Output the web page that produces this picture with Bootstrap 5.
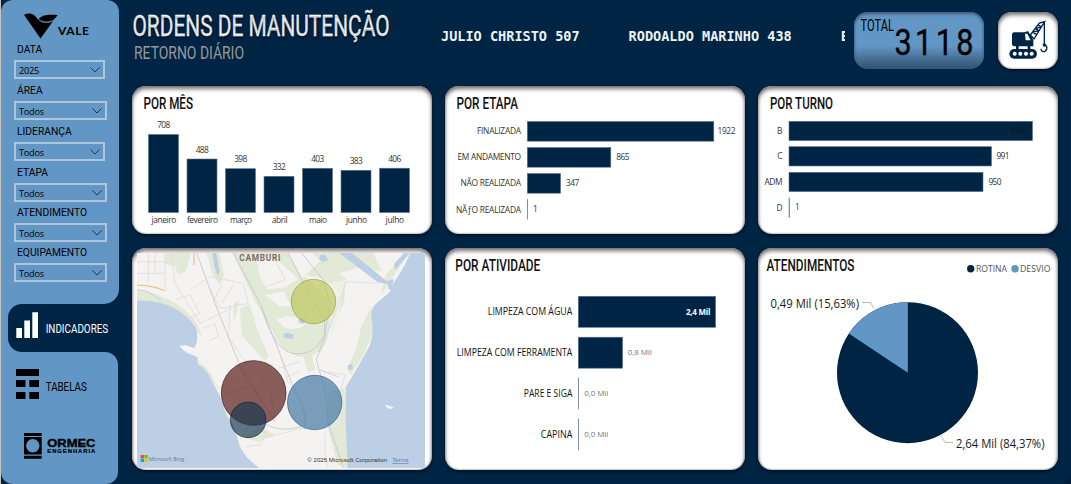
<!DOCTYPE html>
<html lang="pt-BR">
<head>
<meta charset="utf-8">
<meta name="viewport" content="width=device-width, initial-scale=1">
<title>Ordens de Manutenção</title>
<link href="https://cdn.jsdelivr.net/npm/bootstrap@5.3.0/dist/css/bootstrap.min.css" rel="stylesheet">
<style>
:root{--navy:#002443;--sky:#6296c4}
body{background:#001c36;font-family:"Open Sans","Noto Sans",sans-serif;color:#000;overflow:hidden}
svg{display:block}
.page{width:1071px;height:484px;background:var(--navy);border-left:1px solid #c9c4c0;border-radius:0 0 12px 0}
.side{width:118px;flex:none}
.side-top{height:304px;background:var(--sky);border-radius:12px 12px 15px 0;padding:12px 0 0 13px}
.side-mid{height:48px;background:var(--sky)}
.side-mid a{height:48px;margin-left:7px;background:var(--navy);border-radius:14px 0 0 14px}
.side-bottom{height:132px;background:var(--sky);border-radius:0 13px 12px 12px;width:117px}
.side-joint{background:var(--navy)}
.filt{font-family:Roboto,sans-serif;font-size:10.3px;line-height:21px;padding-left:3px;height:21px}
.filt.low{height:20px;line-height:20px}
.pick{height:19px;width:93px;border:2px solid #afc6da;margin-bottom:1px;padding:1px 3px 0 3px;font-size:9.2px;letter-spacing:-.25px;line-height:15px}
.pick.narrow{width:91px}
.r{font-family:Roboto,sans-serif}
.ticker{font:bold 13.55px "DejaVu Sans Mono",monospace;color:#eef2f5;white-space:pre;width:404px;overflow:hidden;line-height:20px;height:20px;margin-top:26px}
.total{width:130px;height:57px;border-radius:14px;background:linear-gradient(#6296c4 60%,#31506e 100%);box-shadow:inset 0 2px 3px #42607d,inset 0 0 3px #42607d}
.tile{background:#fff;border:0;border-radius:14px;box-shadow:inset 0 3px 4px #77706f,inset 0 0 2px #556,0 2px 3px #00142b;overflow:hidden}
.row-a{height:148px}.row-b{height:222px}
.board{gap:13px}
.tile{width:300px;flex:none}
.tile.machine{width:60px;height:57px}
.t{font-family:Roboto,sans-serif;font-size:16.5px;font-weight:500;fill:#111}
.bars rect{fill:var(--navy);stroke:#5c7690;stroke-width:.6}
.lab{font-size:8.4px;fill:#333}
.cat{font-size:10px;fill:#111}
.val{font-size:8px;fill:#777}
.e{text-anchor:end}.m{text-anchor:middle}
</style>
</head>
<body>
<div class="page d-flex">
  <aside class="side d-flex flex-column">
    <div class="side-joint"><div class="side-top">
      <svg width="80" height="27" viewBox="14 12 80 27">
        <path d="M24 14.8C29 12.4 34 13.5 37 18.3L42 22.3C46 23.8 50 23 53.5 20.5L40.5 38.5Z"/>
        <path d="M38.5 19.2C43 13.8 50 14.7 57.5 15C54.5 20 49.5 24 43 21.8Z"/>
        <path d="M37.500 18.500Q42 23.800 53 21" fill="none" stroke="#6296c4" stroke-width=".8"/>
        <text x="58" y="34.8" font-family="Lato" font-weight="700" font-size="12" textLength="31">VALE</text>
      </svg>
      <div class="filt">DATA</div>
      <div class="pick narrow d-flex justify-content-between"><span>2025</span><svg width="10" height="14"><path d="M.5 4.5l4.5 4.5 4.5-4.5" fill="none" stroke="#24384c"/></svg></div>
      <div class="filt">ÁREA</div>
      <div class="pick d-flex justify-content-between"><span>Todos</span><svg width="10" height="14"><path d="M.5 4.5l4.5 4.5 4.5-4.5" fill="none" stroke="#24384c"/></svg></div>
      <div class="filt">LIDERANÇA</div>
      <div class="pick narrow d-flex justify-content-between"><span>Todos</span><svg width="10" height="14"><path d="M.5 4.5l4.5 4.5 4.5-4.5" fill="none" stroke="#24384c"/></svg></div>
      <div class="filt">ETAPA</div>
      <div class="pick d-flex justify-content-between"><span>Todos</span><svg width="10" height="14"><path d="M.5 4.5l4.5 4.5 4.5-4.5" fill="none" stroke="#24384c"/></svg></div>
      <div class="filt low">ATENDIMENTO</div>
      <div class="pick d-flex justify-content-between"><span>Todos</span><svg width="10" height="14"><path d="M.5 4.5l4.5 4.5 4.5-4.5" fill="none" stroke="#24384c"/></svg></div>
      <div class="filt low">EQUIPAMENTO</div>
      <div class="pick d-flex justify-content-between"><span>Todos</span><svg width="10" height="14"><path d="M.5 4.5l4.5 4.5 4.5-4.5" fill="none" stroke="#24384c"/></svg></div>
    </div></div>
    <div class="side-mid"><a class="d-block" href="#"><svg width="110" height="48" viewBox="8 304 110 48" fill="#fff">
      <path d="M16.3 328h5.7v10h-5.7zM24.3 320.5h5.7V338h-5.7zM32.3 312.3h5.7V338h-5.7z"/>
      <text class="r" x="45.7" y="333" font-size="13.3" textLength="62.5" lengthAdjust="spacingAndGlyphs">INDICADORES</text></svg></a></div>
    <div class="side-joint"><div class="side-bottom"><svg width="117" height="132" viewBox="1 352 117 132">
      <path d="M16 369h23v7H16zM16 380h9.5v7H16zM29.3 380H39v7h-9.7zM16 392h9.5v7H16zM29.3 392H39v7h-9.7z"/>
      <text class="r" x="45.7" y="391" font-size="13.3" textLength="41" lengthAdjust="spacingAndGlyphs">TABELAS</text>
      <path d="M24 433h17.7v3H24zM24 437h17.7v17.5H24zM24 455.7h17.7v3H24z"/><circle cx="32.8" cy="445.8" r="6.7" fill="#6296c4"/>
      <g font-family="Liberation Sans" font-weight="700" stroke="#000" stroke-width=".4"><text x="47.3" y="447.3" font-size="11.6" textLength="48" lengthAdjust="spacingAndGlyphs">ORMEC</text>
      <text x="47.3" y="453.3" font-size="5.8" stroke-width=".2" textLength="48">ENGENHARIA</text></g>
    </svg></div></div>
  </aside>
  <main class="flex-grow-1" style="padding-left:13px">
    <header class="d-flex" style="height:86px">
      <svg width="309" height="80" viewBox="132 0 309 80">
        <text class="r" x="132.5" y="36.3" font-size="30" fill="#fff" stroke="#fff" stroke-width=".3" textLength="257" lengthAdjust="spacingAndGlyphs" style="text-shadow:0 2px 2px #001225">ORDENS DE MANUTENÇÃO</text>
        <text class="r" x="134" y="59.3" font-size="19" fill="#999" textLength="110" lengthAdjust="spacingAndGlyphs">RETORNO DIÁRIO</text>
      </svg>
      <div class="ticker">JULIO CHRISTO 507      RODOALDO MARINHO 438      E</div>
      <div class="total" style="margin:12px 14px 0 9px"><svg width="130" height="57" viewBox="854 12 130 57">
        <text class="r" x="860.5" y="31.3" font-size="16.5" textLength="33.5" lengthAdjust="spacingAndGlyphs">TOTAL</text>
        <text class="r" transform="translate(894.500 55) scale(.84 1)" font-size="36.5" stroke="#000" stroke-width=".4" textLength="94">3118</text></svg></div>
      <div class="tile machine" style="margin-top:12px"><svg width="60" height="57" viewBox="654 36 180 171">
        <g fill="#002443"><path d="M703 97h33l12 20v22h-45q-7 0-7-7v-27q0-8 7-8z"/><rect x="688" y="147" width="83" height="29" rx="14.500"/><path d="M708 138h8v10h-8zM743 138h8v10h-8zM734 97l10-4 16 27v19h-18z"/></g>
        <path d="M735 101h7l10 20h-15z" fill="#fff"/>
        <g fill="#fff"><circle cx="704" cy="161" r="6"/><circle cx="721" cy="161" r="6"/><circle cx="738" cy="161" r="6"/><circle cx="755" cy="161" r="6"/></g>
        <path d="M751 105L778 69L794 65L762 117ZM758 97l12 6M758 97l19-6M766 86l10 6M766 86l20-6M775 74l10 8M793 65V134M793 134q9 3 7 13q-3 9-11 8q-6-2-6-9" fill="none" stroke="#002443" stroke-width="4"/><circle cx="793" cy="135" r="5" fill="#002443"/></svg></div>
    </header>
    <div class="board row-a d-flex">
      <section class="tile"><svg width="300" height="148" viewBox="132 86 300 148">
        <text class="t" x="143.500" y="108.500" textLength="49.500" lengthAdjust="spacingAndGlyphs">POR MÊS</text>
        <g class="bars"><rect x="148.500" y="134.500" width="30" height="78"/><rect x="187" y="159" width="30" height="53.500"/><rect x="225.500" y="168.700" width="30" height="43.800"/><rect x="264" y="176.300" width="30" height="36.200"/><rect x="302.500" y="168.300" width="30" height="44.200"/><rect x="341" y="170.300" width="30" height="42.200"/><rect x="379.500" y="168.200" width="30" height="44.300"/></g>
        <g class="lab m"><text x="163.700" y="128.200" textLength="13">708</text><text x="202.200" y="153" textLength="13">488</text><text x="240.700" y="162.300" textLength="13">398</text><text x="279.200" y="170" textLength="13">332</text><text x="317.700" y="162.300" textLength="13">403</text><text x="356.200" y="164.300" textLength="13">383</text><text x="394.700" y="162.300" textLength="13">406</text>
        <text x="163.900" y="223" textLength="25">janeiro</text><text x="202.500" y="223" textLength="31">fevereiro</text><text x="241" y="223" textLength="22">março</text><text x="279.700" y="223" textLength="16">abril</text><text x="318" y="223" textLength="18">maio</text><text x="356.500" y="223" textLength="21">junho</text><text x="394.800" y="223" textLength="18.500">julho</text></g>
      </svg></section>
      <section class="tile"><svg width="300" height="148" viewBox="445 86 300 148">
        <text class="t" x="456.500" y="108.500" textLength="61.500" lengthAdjust="spacingAndGlyphs">POR ETAPA</text>
        <g class="bars"><rect x="527.300" y="121.500" width="186.500" height="19.700"/><rect x="527.300" y="147.500" width="83.500" height="19.700"/><rect x="527.300" y="173.500" width="33.300" height="19.700"/><rect x="527.300" y="199.500" width=".3" height="19.700"/></g>
        <g class="lab e"><text x="521" y="134.200" textLength="44">FINALIZADA</text><text x="521" y="160.200" textLength="63.500">EM ANDAMENTO</text><text x="521" y="186.300" textLength="60.500">NÃO REALIZADA</text><text x="521" y="213" textLength="65">NÃƒO REALIZADA</text></g>
        <g class="lab"><text x="717.500" y="134.200" textLength="18">1922</text><text x="616.300" y="160.200" textLength="13.300">865</text><text x="566" y="186.200" textLength="13.300">347</text><text x="533" y="212.200">1</text></g>
      </svg></section>
      <section class="tile"><svg width="300" height="148" viewBox="758 86 300 148">
        <text class="t" x="770" y="108.500" textLength="63" lengthAdjust="spacingAndGlyphs">POR TURNO</text>
        <g class="bars"><rect x="789" y="121.300" width="243.500" height="19.300"/><rect x="789" y="146.700" width="202.500" height="19.300"/><rect x="789" y="172.300" width="194" height="19.300"/><rect x="789" y="198" width=".3" height="19.300"/></g>
        <g class="lab e"><text x="782.500" y="134">B</text><text x="782.500" y="159.300">C</text><text x="782.500" y="185.200" textLength="18">ADM</text><text x="782.500" y="211">D</text></g>
        <g class="lab"><text x="1010" y="134" textLength="17.500" style="fill:#0c1218">1192</text><text x="996.500" y="159.300" textLength="13">991</text><text x="988.500" y="185.300" textLength="13">950</text><text x="795" y="210.300">1</text></g>
      </svg></section>
    </div>
    <div class="board row-b d-flex" style="margin-top:14px">
      <section class="tile"><svg width="300" height="222" viewBox="132 248 300 222">
        <svg x="137" y="253" width="288" height="215" viewBox="36 39 864 645">
          <rect x="36" y="39" width="864" height="645" fill="#f5f3f2"/>
          <g fill="#e2e9d7">
            <path d="M36 150Q110 160 160 195Q220 235 230 290Q210 270 180 225Q120 190 36 182ZM118 39h80l-15 55-25 10-8-25-32-6zM245 39h38l14 65-12 30-22-28z"/>
            <path d="M322 39h168l42 75 60-58 70 60-5 75-45 75q-5 80-75 85-52-2-80-52L390 184Z"/>
            <path d="M560 39l75 62 75-20 60 15-25-57ZM535 350l25-10 10 50-22 5zM345 205l30-12 20 70 36 85-12 15-70-78zM325 190l20-8-18 62zM738 200l5 80-25 60-40 63-12-15 28-65 14-60zM215 355l45 50 30 90 35 60-20-20-65-135zM610 455l52-12 6 241-30-10-32-120zM350 590l60-30 40 25-50 20zM850 39l-25 40-60 90 20-70z"/>
            <path d="M600 130l60-10-25 130-15 40z" fill="#edf0e5"/>
          </g>
          <g fill="#f5f3f2"><path d="M395 55l45-10 50 45 30 28-45 25-50 5-20-40zM420 165l55-10 25 45-38-2zM455 240q45-28 85 13q-20 22-60 10zM535 105l50 8 60 50-40 10z"/></g>
          <g fill="#bccfe4"><path d="M36 182Q95 178 145 203Q190 226 213 264Q223 300 208 324L180 315 165 320 185 338 216 350 220 372Q250 395 260 425L284 465 306 530 325 555 345 620 365 652 402 684H36Z"/>
          <path d="M856 39L838 78 808 126 795 155 755 190Q735 208 739 230Q749 285 731 323L689 397 663 440 662 550 668 684H900V39Z"/>
          <path d="M643 39h38l105 85 20-8-5 34-10-2-3-16-30-5ZM807 72l30-33h18l-44 50zM262 39h12l10 55-5 15-11-28zM475 282l14-4 18 7-4 12-24-3zM520 238l20-5-3 18-15-2zM586 45l14 0 10 15-16 6-12-8zM667 376l15-3 3 13-14 4z"/></g>
          <g fill="none" stroke="#c4c7ca" stroke-width="2.500"><path d="M215 39L270 190 350 390 450 545M325 39L410 200 440 280 500 430 540 520V570M490 39L550 160 598 240 600 285 574 360 600 450 610 550 655 684M530 39L595 120 615 190 598 290M410 200Q440 320 500 340Q570 350 598 285M420 550Q460 580 530 560M585 390L640 410"/></g>
          <g fill="none" stroke="#dad8d7" stroke-width="2"><path d="M36 65H120V150M70 39V125M36 100H118M90 39V100M140 39L150 130 225 250 320 205M150 180l45-15 30 55-42 20M195 150l60-40 100 20 15 60-85 15-30-60M290 135l-25 50M325 135l-35 55M235 265l35-12 10 35-28 15M315 195L310 290 365 370M235 375l45 70M440 39l40 80-65 25M460 385l65-20M480 415l40-20M450 290L490 430M350 590l30-40 45 30-20 35-45 5M430 590L600 550M665 125L585 340M610 395l50 10-12 40M665 125l90 5M600 580V640L610 684M340 450l90-25 20 110M290 470l70-30"/></g>
          <path d="M36 136Q85 135 120 153M207 39V75" stroke="#e8c588" stroke-width="4" fill="none"/>
          <path d="M36 149Q75 150 108 183" stroke="#bccfe4" stroke-width="3" fill="none"/>
          <path d="M780 493l25 9-5 5-14-3zM162 316l24 4 18 21-28-12z" fill="#f7f6f4"/>
          <text x="343" y="64" font-family="Roboto" font-weight="700" font-size="25" fill="#796a64" textLength="123">CAMBURI</text>
          <circle cx="565.500" cy="184.500" r="66.500" fill="#bdc75e" fill-opacity=".7" stroke="#929f3e" stroke-width="2"/>
          <circle cx="386" cy="459" r="97" fill="#5b1d1d" fill-opacity=".7" stroke="#2e1718" stroke-width="2"/>
          <circle cx="569" cy="487.500" r="81.500" fill="#4778a5" fill-opacity=".7" stroke="#2e5f91" stroke-width="2"/>
          <circle cx="369.500" cy="539.500" r="53.500" fill="#153750" fill-opacity=".67" stroke="#132435" stroke-width="2"/>
          <path d="M47 645h10v10H47z" fill="#f25022"/><path d="M58 645h10v10H58z" fill="#7fba00"/><path d="M47 656h10v10H47z" fill="#00a4ef"/><path d="M58 656h10v10H58z" fill="#ffb900"/>
          <text x="71" y="662" font-family="Open Sans" font-size="18" fill="#71767c" textLength="106" lengthAdjust="spacingAndGlyphs">Microsoft Bing</text>
          <g font-family="Liberation Sans" font-size="18"><text x="547" y="666" fill="#333" textLength="239" lengthAdjust="spacingAndGlyphs">© 2025 Microsoft Corporation</text><text x="802" y="667" fill="#6276c5" text-decoration="underline" textLength="48" lengthAdjust="spacingAndGlyphs">Terms</text></g>
        </svg>
      </svg></section>
      <section class="tile"><svg width="300" height="222" viewBox="445 248 300 222">
        <text class="t" x="455.300" y="270.700" textLength="85" lengthAdjust="spacingAndGlyphs">POR ATIVIDADE</text>
        <g class="bars"><rect x="578.300" y="296.300" width="137.300" height="31"/><rect x="578.300" y="337.200" width="44.300" height="31"/><rect x="578.300" y="378" width=".3" height="31"/><rect x="578.300" y="419" width=".3" height="31"/></g>
        <g class="cat e"><text x="572.300" y="315.200" textLength="84.500" lengthAdjust="spacingAndGlyphs">LIMPEZA COM ÁGUA</text><text x="572.300" y="356.200" textLength="115.500" lengthAdjust="spacingAndGlyphs">LIMPEZA COM FERRAMENTA</text><text x="572.300" y="397.200" textLength="48.500" lengthAdjust="spacingAndGlyphs">PARE E SIGA</text><text x="572.300" y="438.200" textLength="31.500" lengthAdjust="spacingAndGlyphs">CAPINA</text></g>
        <g class="val"><text x="686" y="315" textLength="24.500" font-weight="700" style="fill:#fff">2,4 Mil</text><text x="627.700" y="355.200" textLength="24">0,8 Mil</text><text x="584.300" y="396" textLength="24">0,0 Mil</text><text x="584.300" y="437" textLength="24">0,0 Mil</text></g>
      </svg></section>
      <section class="tile"><svg width="300" height="222" viewBox="758 248 300 222">
        <text class="t" x="766.500" y="270.700" textLength="88" lengthAdjust="spacingAndGlyphs">ATENDIMENTOS</text>
        <circle cx="970.700" cy="268.700" r="3.700" fill="#002443"/><circle cx="1015" cy="268.700" r="3.700" fill="#6296c4"/>
        <g font-size="9.500" fill="#555"><text x="976" y="272.200" textLength="31" lengthAdjust="spacingAndGlyphs">ROTINA</text><text x="1020" y="272.200" textLength="30.500" lengthAdjust="spacingAndGlyphs">DESVIO</text></g>
        <circle cx="907.500" cy="372.700" r="70.500" fill="#002443"/>
        <path d="M907.800 372.700V302.200A70.500 70.500 0 0 0 848.800 333.600Z" fill="#6296c4"/>
        <path d="M862 302.500h8.500l3.500 6M941 436l4 6.500h8" fill="none" stroke="#bbb"/>
        <g font-size="12" fill="#1a1a1a"><text x="770.500" y="308" textLength="88.500" lengthAdjust="spacingAndGlyphs">0,49 Mil (15,63%)</text><text x="956" y="448" textLength="88.500" lengthAdjust="spacingAndGlyphs">2,64 Mil (84,37%)</text></g>
      </svg></section>
    </div>
  </main>
</div>
<script src="https://cdn.jsdelivr.net/npm/bootstrap@5.3.0/dist/js/bootstrap.bundle.min.js"></script>
</body>
</html>
